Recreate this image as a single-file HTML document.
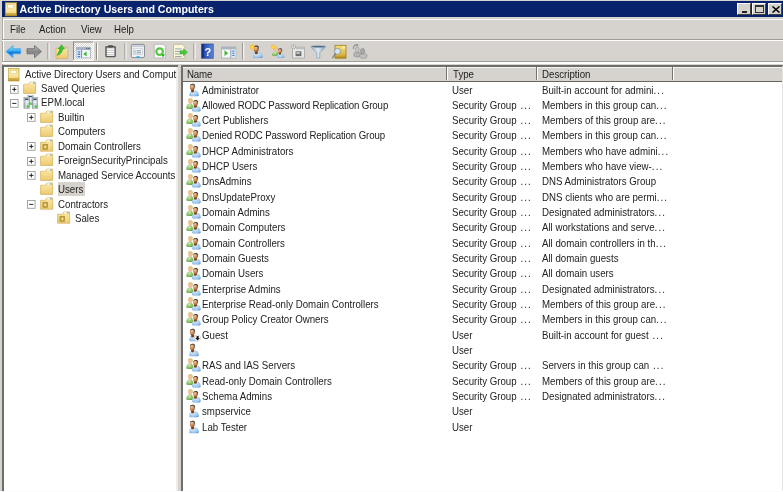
<!DOCTYPE html>
<html><head><meta charset="utf-8">
<style>
*{margin:0;padding:0;box-sizing:border-box}
html,body{width:783px;height:492px;overflow:hidden;background:#d6d3ce}
body{position:relative;will-change:transform;font-family:"Liberation Sans",sans-serif;font-size:9.7px;color:#222}
.a{position:absolute}
.t{position:absolute;white-space:nowrap;line-height:15px;height:15px;font-size:10.2px;transform:scaleX(0.951);transform-origin:0 0}
.ic{position:absolute;overflow:visible}
.exp{position:absolute;width:9px;height:9px;border:1px solid #9a9a9a;background:#fff}
.exp .h{position:absolute;left:1px;top:3px;width:5px;height:1px;background:#333}
.exp .v{position:absolute;left:3px;top:1px;width:1px;height:5px;background:#333}
.sel{position:absolute;background:#d6d3cc}
.sep{position:absolute;top:43px;width:2px;height:16px;border-left:1px solid #8e8b85;border-right:1px solid #fff}
</style></head><body>
<svg width="0" height="0" style="position:absolute">
<defs>
 <linearGradient id="gold" x1="0" y1="0" x2="1" y2="1"><stop offset="0" stop-color="#fff3b0"/><stop offset="0.6" stop-color="#e9cf6c"/><stop offset="1" stop-color="#b08a1e"/></linearGradient>
 <linearGradient id="fold" x1="0" y1="0" x2="0" y2="1"><stop offset="0" stop-color="#fbeaa8"/><stop offset="1" stop-color="#eccb72"/></linearGradient>
 <radialGradient id="face" cx="0.4" cy="0.3" r="0.75"><stop offset="0" stop-color="#f2c9a0"/><stop offset="0.55" stop-color="#c98a55"/><stop offset="1" stop-color="#7a4118"/></radialGradient>
 <radialGradient id="bblue" cx="0.4" cy="0.35" r="0.75"><stop offset="0" stop-color="#d2e8fa"/><stop offset="0.7" stop-color="#9cc6ee"/><stop offset="1" stop-color="#5b93cc"/></radialGradient>
 <radialGradient id="bgreen" cx="0.4" cy="0.35" r="0.75"><stop offset="0" stop-color="#b8e09a"/><stop offset="0.7" stop-color="#7dbb5c"/><stop offset="1" stop-color="#43892c"/></radialGradient>

 <linearGradient id="rootg" x1="0" y1="0" x2="0" y2="1"><stop offset="0" stop-color="#f3de8c"/><stop offset="0.45" stop-color="#f8e9a6"/><stop offset="0.76" stop-color="#f2dc8a"/><stop offset="0.8" stop-color="#d2ae48"/><stop offset="1" stop-color="#c29a30"/></linearGradient>
 <linearGradient id="srv" x1="0" y1="0" x2="1" y2="0"><stop offset="0" stop-color="#9aa5ae"/><stop offset="0.5" stop-color="#e4e9ed"/><stop offset="1" stop-color="#a8b2ba"/></linearGradient>
 <symbol id="u" viewBox="0 0 16 16">
  <path d="M3.2 12.2 C3.2 8.6 5 7.2 7.9 7.2 C11 7.2 12.8 8.6 12.8 12.2 C12.8 13.1 11 13.3 7.9 13.3 C5 13.3 3.2 13.1 3.2 12.2Z" fill="url(#bblue)"/>
  <path d="M5.4 8.2 L6.4 10.6 L7.2 8.2Z" fill="#fff" opacity=".85"/>
  <path d="M5 8.6 C5.5 9.6 7.4 9.8 8 8.6 L7.8 6.6 L5.4 6.6Z" fill="#7a3e12"/>
  <ellipse cx="6.3" cy="4.1" rx="2.3" ry="3.4" fill="url(#face)"/>
  <path d="M3.9 3.2 C3.6 0.2 8.9 -0.3 9.1 2.4 L9.1 5.6 C8.6 4.5 8.5 2.4 7.6 2 C6.5 1.6 4.8 1.9 3.9 3.2Z" fill="#454545"/>
 </symbol>
 <symbol id="g" viewBox="0 0 16 16">
  <path d="M0.2 10 C0.2 7.3 1.8 5.8 3.9 5.8 C6.2 5.8 7.4 7.3 7.4 10 C7.4 10.8 6 11 3.9 11 C1.8 11 0.2 10.8 0.2 10Z" fill="url(#bgreen)"/>
  <path d="M3 6.5 L3.8 8.6 L4.6 6.5Z" fill="#fff" opacity=".8"/>
  <ellipse cx="4.3" cy="3.2" rx="2.1" ry="3" fill="#ebc29c"/>
  <path d="M1.9 2.8 C1.5 -0.6 7.2 -0.8 6.9 2.6 L6.9 5 C6.4 4 6.3 1.8 5.3 1.5 C4.2 1.2 2.8 1.6 1.9 2.8Z" fill="#d9c27a"/>
  <path d="M6 12.4 C6 9 7.6 7.5 10.3 7.5 C13 7.5 14.7 9 14.7 12.4 C14.7 13.4 13 13.6 10.3 13.6 C7.6 13.6 6 13.4 6 12.4Z" fill="url(#bblue)"/>
  <path d="M8.2 8.4 L9.1 10.6 L9.9 8.4Z" fill="#fff" opacity=".85"/>
  <path d="M7.9 8.9 C8.4 9.8 10.3 10 10.8 8.9 L10.6 7.2 L8.2 7.2Z" fill="#7a3e12"/>
  <ellipse cx="9.4" cy="5.3" rx="2.1" ry="3.1" fill="url(#face)"/>
  <path d="M7.2 4.4 C6.9 1.3 12.1 1.1 12.1 3.8 L12 6.6 C11.5 5.6 11.4 3.5 10.6 3.2 C9.6 2.8 8 3.2 7.2 4.4Z" fill="#404040"/>
 </symbol>
 <symbol id="folder" viewBox="0 0 16 16">
  <path d="M0.6 3.3 L5.6 3.3 C6.2 3.3 6.2 1.1 7 1.1 L12.6 1.1 L12.6 12.4 L0.6 12.4Z" fill="url(#fold)" stroke="#d2aa58" stroke-width="0.7"/>
  <path d="M7 1.9 L12 1.9" stroke="#fffbea" stroke-width="1"/>
  <path d="M0.8 3.8 L12.4 3.8" stroke="#f9e7ae" stroke-width="0.5"/>
  <rect x="10" y="1.5" width="1.9" height="1" fill="#4f9be0"/>
  <rect x="11.9" y="3.6" width="0.6" height="8.6" fill="#e2bd68" opacity=".7"/>
 </symbol>
 <symbol id="ou" viewBox="0 0 16 16">
  <path d="M0.6 3.3 L5.6 3.3 C6.2 3.3 6.2 0.9 7 0.9 L12.6 0.9 L12.8 12.2 L0.6 12.2Z" fill="url(#fold)" stroke="#d2aa58" stroke-width="0.7"/>
  <path d="M7 1.7 L12 1.7" stroke="#fffbea" stroke-width="1"/>
  <rect x="10" y="1.3" width="1.9" height="1" fill="#4f9be0"/>
  <rect x="8.8" y="3.6" width="0.6" height="8.4" fill="#f7e6b0" opacity=".8"/>
  <rect x="2.9" y="5.2" width="4.8" height="5.2" fill="#c6a440" stroke="#a0802a" stroke-width="0.5"/>
  <circle cx="5.3" cy="7.8" r="1.1" fill="#f8eeb0"/>
 </symbol>
 <symbol id="root" viewBox="0 0 16 16">
  <rect x="0.2" y="1.6" width="10.8" height="12.4" fill="url(#rootg)" stroke="#b38e2a" stroke-width="0.6"/>
  <rect x="2.4" y="3.4" width="5.8" height="3.3" fill="#fffce8" stroke="#dcc070" stroke-width="0.5"/>
 </symbol>
 <symbol id="domain" viewBox="0 0 16 16">
  <rect x="4.9" y="-0.2" width="5.2" height="10" fill="url(#srv)" stroke="#8a949c" stroke-width="0.5"/>
  <rect x="5.8" y="0.9" width="3.4" height="1.2" rx="0.6" fill="#35505e"/>
  <rect x="0.9" y="2.5" width="5.7" height="11" fill="url(#srv)" stroke="#8a949c" stroke-width="0.5"/>
  <rect x="9.2" y="2.5" width="5.6" height="11" fill="url(#srv)" stroke="#8a949c" stroke-width="0.5"/>
  <rect x="2" y="3.6" width="3.4" height="1.3" rx="0.6" fill="#35505e"/><rect x="10.3" y="3.6" width="3.4" height="1.3" rx="0.6" fill="#35505e"/>
  <rect x="1.6" y="6.5" width="4.3" height="1" fill="#f6f8fa"/><rect x="9.9" y="6.5" width="4.3" height="1" fill="#f6f8fa"/>
  <circle cx="4.8" cy="11.6" r="1.3" fill="#3fd22a"/><circle cx="12.9" cy="11.6" r="1.3" fill="#3fd22a"/><circle cx="7.5" cy="8.6" r="1.2" fill="#3fd22a"/>
 </symbol>
</defs></svg>

<!-- window frame / title -->
<div class="a" style="left:0;top:0;width:783px;height:492px;background:#d6d3ce"></div>
<div class="a" style="left:2px;top:1px;width:781px;height:16px;background:#08236b"></div>
<svg class="ic" style="left:4.8px;top:1px" width="17" height="17" viewBox="0 0 16 16"><use href="#root"/></svg>
<div class="a" style="left:19.5px;top:1px;line-height:16px;font-weight:bold;font-size:10.6px;color:#fff;white-space:nowrap">Active Directory Users and Computers</div>
<!-- caption buttons -->
<div class="a" style="left:737px;top:3px;width:14px;height:12px;background:#d6d3ce;border-top:1px solid #fff;border-left:1px solid #fff;border-right:1px solid #404040;border-bottom:1px solid #404040"><div class="a" style="left:3.5px;top:6.5px;width:5px;height:2px;background:#222"></div></div>
<div class="a" style="left:752px;top:3px;width:14px;height:12px;background:#d6d3ce;border-top:1px solid #fff;border-left:1px solid #fff;border-right:1px solid #404040;border-bottom:1px solid #404040"><div class="a" style="left:1.5px;top:0.7px;width:9px;height:8px;border:1px solid #333;border-top-width:2px"></div></div>
<div class="a" style="left:768px;top:3px;width:14px;height:12px;background:#d6d3ce;border-top:1px solid #fff;border-left:1px solid #fff;border-right:1px solid #404040;border-bottom:1px solid #404040"><svg class="a" style="left:2.5px;top:1.5px" width="8" height="7"><path d="M0.5 0.5 L7.5 6.5 M7.5 0.5 L0.5 6.5" stroke="#000" stroke-width="1.5"/></svg></div>

<!-- menu bar -->
<div class="a" style="left:3px;top:19px;width:780px;height:1px;background:#fff"></div>
<div class="a" style="left:2px;top:17px;width:1px;height:48px;background:#aeaba4"></div><div class="a" style="left:3px;top:19px;width:1px;height:20px;background:#fff"></div>
<div class="a" style="left:2px;top:38.6px;width:781px;height:1px;background:#9f9c95"></div>
<div class="a" style="left:2px;top:39.6px;width:781px;height:1px;background:#fff"></div>
<div class="t" style="left:10px;top:22px">File</div>
<div class="t" style="left:39px;top:22px">Action</div>
<div class="t" style="left:80.5px;top:22px">View</div>
<div class="t" style="left:114px;top:22px">Help</div>

<!-- toolbar -->
<div class="a" style="left:3px;top:40px;width:1px;height:21px;background:#fff"></div>
<div class="a" style="left:2px;top:61px;width:781px;height:1px;background:#9f9c95"></div>
<div class="a" style="left:2px;top:62px;width:781px;height:2px;background:#fff"></div>
<svg class="a" style="left:0;top:40px" width="380" height="22" viewBox="0 40 380 22">
<defs>
 <linearGradient id="bk" x1="0" y1="0" x2="0" y2="1"><stop offset="0" stop-color="#9ee2fd"/><stop offset="0.42" stop-color="#3fb0f2"/><stop offset="0.6" stop-color="#0c72d8"/><stop offset="1" stop-color="#6ccaf8"/></linearGradient>
 <linearGradient id="fw" x1="0" y1="0" x2="0" y2="1"><stop offset="0" stop-color="#c4c4c4"/><stop offset="0.5" stop-color="#858585"/><stop offset="1" stop-color="#a8a8a8"/></linearGradient>
 <linearGradient id="hb" x1="0" y1="0" x2="1" y2="0"><stop offset="0" stop-color="#1d3f9e"/><stop offset="1" stop-color="#5b86db"/></linearGradient>
 <linearGradient id="fun" x1="0" y1="0" x2="1" y2="0"><stop offset="0" stop-color="#9fb9cc"/><stop offset="0.5" stop-color="#dde9f1"/><stop offset="1" stop-color="#7f9db5"/></linearGradient>
 <pattern id="dith" width="2" height="2" patternUnits="userSpaceOnUse"><rect width="2" height="2" fill="#d8d5ce"/><rect width="1" height="1" fill="#fff"/><rect x="1" y="1" width="1" height="1" fill="#fff"/></pattern>
</defs>
<!-- back -->
<path d="M6 51.5 L13 45.5 L13 48.7 L20.7 48.7 L20.7 53.8 L13 53.8 L13 57.8Z" fill="url(#bk)" stroke="#4aa8ec" stroke-width="0.8" stroke-linejoin="round"/>
<!-- forward -->
<path d="M41.4 51.5 L34.5 45.5 L34.5 48.7 L27 48.7 L27 53.8 L34.5 53.8 L34.5 57.8Z" fill="url(#fw)" stroke="#666" stroke-width="0.8" stroke-linejoin="round"/>
<rect x="47.5" y="43" width="1" height="16.5" fill="#8e8b85"/><rect x="48.5" y="43" width="1" height="16.5" fill="#fff"/>
<!-- up folder -->
<path d="M56 48.3 L60 48.3 L61 47.2 L67.8 47.2 L67.8 58.5 L56 58.5Z" fill="url(#fold)" stroke="#d6ae58" stroke-width="0.7"/>
<path d="M57.2 55.5 C58.2 52.5 59.8 50.5 59.8 48.8 L58.2 48.8 L61.6 44.8 L64.4 49 L62.6 49 C62.4 52 60.2 54.5 57.2 55.5Z" fill="#3cc230" stroke="#239a1c" stroke-width="0.5"/>
<circle cx="65.5" cy="48" r="0.8" fill="#7ab6e6"/>
<!-- pressed button -->
<rect x="73" y="41.5" width="20.5" height="19" fill="url(#dith)"/>
<rect x="73" y="41.5" width="20.5" height="1" fill="#8e8b85"/><rect x="73" y="41.5" width="1" height="19" fill="#8e8b85"/>
<rect x="73" y="59.8" width="20.5" height="1" fill="#fff"/><rect x="92.8" y="41.5" width="1" height="19" fill="#fff"/>
<rect x="76.3" y="47.2" width="14.3" height="10.7" fill="#f6f8fa" stroke="#8d9aab" stroke-width="0.6"/>
<rect x="76.3" y="47.2" width="14.3" height="2.8" fill="#a7b3c3"/>
<rect x="86" y="47.8" width="1.4" height="1.5" fill="#5d6b7e"/><rect x="88.2" y="47.8" width="1.4" height="1.5" fill="#5d6b7e"/>
<rect x="76.6" y="50" width="4.8" height="7.6" fill="#e1e7ee"/>
<rect x="81.2" y="50" width="0.9" height="7.6" fill="#6e7d90"/>
<rect x="77.7" y="51.3" width="2.5" height="1.3" rx="0.5" fill="#3b86d6"/><rect x="77.7" y="53.6" width="2.5" height="1.3" rx="0.5" fill="#3b86d6"/><rect x="77.7" y="55.9" width="2.5" height="1.3" rx="0.5" fill="#3b86d6"/>
<path d="M83.2 54 L86.6 51.4 L86.6 56.6Z" fill="#3cba2e"/>
<rect x="96" y="43" width="1" height="16.5" fill="#8e8b85"/><rect x="97" y="43" width="1" height="16.5" fill="#fff"/>
<!-- clipboard -->
<rect x="105.3" y="46" width="10.6" height="11.3" rx="1.3" fill="#5a5a5a"/>
<rect x="106.8" y="47.5" width="7.6" height="8.4" fill="#c9c9c9"/>
<rect x="106.8" y="48.6" width="7.6" height="1.1" fill="#fff"/><rect x="106.8" y="50.8" width="7.6" height="1.1" fill="#fff"/><rect x="106.8" y="53" width="7.6" height="1.1" fill="#fff"/><rect x="106.8" y="55.1" width="7.6" height="0.9" fill="#f2f2f2"/>
<rect x="108.2" y="45.2" width="4.8" height="2.2" rx="0.6" fill="#4a4a4a"/>
<rect x="124.5" y="43" width="1" height="16.5" fill="#8e8b85"/><rect x="125.5" y="43" width="1" height="16.5" fill="#fff"/>
<!-- properties -->
<rect x="131.3" y="44.4" width="13.2" height="13.2" rx="1.5" fill="#eef0f3" stroke="#7d8590" stroke-width="0.9"/>
<rect x="132" y="45.2" width="11.8" height="1.8" fill="#c7ced8"/>
<rect x="133.5" y="48.5" width="9" height="6" fill="#f7f8fa" stroke="#b6bcc6" stroke-width="0.5"/>
<rect x="134.4" y="50.4" width="1.2" height="1.1" fill="#2f8fe0"/><rect x="136.5" y="50.4" width="4.5" height="0.9" fill="#7b8796"/>
<rect x="134.4" y="52.4" width="1.2" height="1.1" fill="#7b8796"/><rect x="136.5" y="52.4" width="4.5" height="0.9" fill="#7b8796"/>
<rect x="136.5" y="56.2" width="3" height="1.6" fill="#2aa7ec"/>
<!-- refresh -->
<path d="M154.2 44.3 L163.3 44.3 L165.6 46.6 L165.6 57.9 L154.2 57.9Z" fill="#fbfbfb" stroke="#a8a8a8" stroke-width="0.7"/>
<circle cx="159.6" cy="51.6" r="3.3" fill="none" stroke="#52c83e" stroke-width="2.2"/>
<path d="M161.5 54.5 L165 54 L163 57.5Z" fill="#2aa520"/>
<!-- export list -->
<path d="M173.5 44.3 L182.5 44.3 L184.8 46.6 L184.8 58.2 L173.5 58.2Z" fill="#fbf6d8" stroke="#b5ae8a" stroke-width="0.7"/>
<rect x="175" y="48.5" width="6.5" height="0.9" fill="#8d9bb0"/><rect x="175" y="51" width="6.5" height="0.9" fill="#8d9bb0"/><rect x="175" y="53.5" width="6.5" height="0.9" fill="#8d9bb0"/><rect x="175" y="56" width="6.5" height="0.9" fill="#8d9bb0"/>
<path d="M180 50.7 L183.5 50.7 L183.5 48.8 L187.5 52.3 L183.5 55.8 L183.5 53.9 L180 53.9Z" fill="#47c93a" stroke="#2c9d22" stroke-width="0.4"/>
<rect x="193.5" y="43" width="1" height="16.5" fill="#8e8b85"/><rect x="194.5" y="43" width="1" height="16.5" fill="#fff"/>
<!-- help -->
<rect x="201.6" y="44" width="11.6" height="14.2" fill="url(#hb)" stroke="#1a3589" stroke-width="0.6"/>
<rect x="202.2" y="44.5" width="1.5" height="13.2" fill="#132b78"/>
<text x="207.8" y="55.6" font-family="Liberation Sans" font-weight="bold" font-size="11" fill="#fff" text-anchor="middle">?</text>
<!-- action pane -->
<rect x="221.3" y="47" width="14.6" height="11" fill="#f4f6f8" stroke="#8d9aab" stroke-width="0.6"/>
<rect x="221.3" y="47" width="14.6" height="2.4" fill="#a9b4c3"/>
<rect x="231" y="49.4" width="4.6" height="8.3" fill="#dfe6ee"/>
<rect x="230.5" y="49.4" width="0.7" height="8.3" fill="#6e7d90"/>
<rect x="232.3" y="50.5" width="2.2" height="1.1" fill="#3b86d6"/><rect x="232.3" y="52.7" width="2.2" height="1.1" fill="#3b86d6"/><rect x="232.3" y="54.9" width="2.2" height="1.1" fill="#3b86d6"/>
<path d="M224.5 50.3 L228.2 53.2 L224.5 56Z" fill="#3cba2e"/>
<rect x="242.2" y="43" width="1" height="16.5" fill="#8e8b85"/><rect x="243.2" y="43" width="1" height="16.5" fill="#fff"/>
<!-- new user -->
<use href="#u" x="249.8" y="44.8" width="16" height="16"/>
<path d="M252.40 43.70 L253.01 45.62 L254.80 44.70 L253.88 46.49 L255.80 47.10 L253.88 47.71 L254.80 49.50 L253.01 48.58 L252.40 50.50 L251.79 48.58 L250.00 49.50 L250.92 47.71 L249.00 47.10 L250.92 46.49 L250.00 44.70 L251.79 45.62Z" fill="#ffb81c"/>
<circle cx="252.4" cy="47.1" r="1.7" fill="#ffd24a"/>
<!-- new group -->
<use href="#g" x="271.9" y="46.5" width="13.6" height="13.6"/>
<path d="M273.40 43.70 L274.01 45.62 L275.80 44.70 L274.88 46.49 L276.80 47.10 L274.88 47.71 L275.80 49.50 L274.01 48.58 L273.40 50.50 L272.79 48.58 L271.00 49.50 L271.92 47.71 L270.00 47.10 L271.92 46.49 L271.00 44.70 L272.79 45.62Z" fill="#ffb81c"/>
<circle cx="273.4" cy="47.1" r="1.7" fill="#ffd24a"/>
<!-- new OU (gray) -->
<rect x="292.5" y="47.2" width="12" height="10.8" fill="#e9e9e9" stroke="#a5a5a5" stroke-width="0.8"/>
<rect x="296" y="47.2" width="8.5" height="2" fill="#bdbdbd"/>
<rect x="295.6" y="51.3" width="5.8" height="4.8" fill="#6f6f6f"/>
<rect x="296.3" y="52.4" width="3.6" height="1.2" fill="#f0f0f0"/>
<circle cx="293.6" cy="46.6" r="2.1" fill="#e6e6e6" stroke="#a0a0a0" stroke-width="1.1" stroke-dasharray="1 0.65"/>
<circle cx="293.6" cy="46.6" r="0.8" fill="#9a9a9a"/>
<!-- filter -->
<path d="M311.3 46 L325.2 46 L325.2 47.5 L319.8 52.5 L319.8 58 L316.7 58 L316.7 52.5 L311.3 47.5Z" fill="url(#fun)" stroke="#7d97ab" stroke-width="0.6"/>
<ellipse cx="318.25" cy="46.7" rx="6.5" ry="0.9" fill="#4f7088"/>
<!-- find -->
<linearGradient id="fndg" x1="0" y1="0" x2="0" y2="1"><stop offset="0" stop-color="#f6de7a"/><stop offset="0.75" stop-color="#dcb53c"/><stop offset="1" stop-color="#a8841c"/></linearGradient>
<rect x="335" y="45.3" width="11" height="12.9" fill="url(#fndg)" stroke="#a4801c" stroke-width="0.8"/>
<rect x="342.5" y="46.3" width="2.6" height="2.4" fill="#fff4c0" opacity=".8"/>
<circle cx="337.5" cy="51.4" r="3" fill="#d6e8ef" stroke="#8c9ba2" stroke-width="0.9"/>
<path d="M335.4 53.7 L332.6 57.6" stroke="#8a8a8a" stroke-width="1.5" stroke-linecap="round"/>
<!-- add to group (gray) -->
<path d="M353.4 49 C353 46 355.2 44.3 357.6 45.1" fill="none" stroke="#8f8f8f" stroke-width="1.1"/>
<path d="M356.6 43.8 L358.6 45.3 L356.8 46.7Z" fill="#8f8f8f"/>
<ellipse cx="357.2" cy="54.6" rx="3.6" ry="2.6" fill="#b3b3b3" stroke="#8a8a8a" stroke-width="0.5"/>
<ellipse cx="357.2" cy="49.6" rx="2" ry="2.6" fill="#c4c4c4" stroke="#8a8a8a" stroke-width="0.5"/>
<ellipse cx="363.3" cy="56" rx="4" ry="2.5" fill="#bdbdbd" stroke="#8a8a8a" stroke-width="0.5"/>
<ellipse cx="362.6" cy="51.2" rx="2.1" ry="2.8" fill="#a9a9a9" stroke="#7d7d7d" stroke-width="0.5"/>
</svg>


<!-- panes -->
<div class="a" style="left:2px;top:65px;width:176px;height:428px;background:#fff;border-top:2px solid #6f6d69;border-left:2px solid #6f6d69"></div>
<div class="a" style="left:176px;top:67px;width:2px;height:427px;background:#eeede9"></div>
<div class="a" style="left:181px;top:65px;width:602px;height:428px;background:#fff;border-top:2px solid #6f6d69;border-left:2px solid #6f6d69;border-right:1px solid #e6e4df"></div>

<!-- header -->
<div class="a" style="left:183px;top:67px;width:599px;height:15px;background:#d6d3ce;border-top:1px solid #f4f3f0;border-bottom:1px solid #68665f"></div>
<div class="a" style="left:446px;top:67px;width:2px;height:13px;border-left:1px solid #77746e;border-right:1px solid #fff"></div>
<div class="a" style="left:536px;top:67px;width:2px;height:13px;border-left:1px solid #77746e;border-right:1px solid #fff"></div>
<div class="a" style="left:671.5px;top:67px;width:2px;height:13px;border-left:1px solid #77746e;border-right:1px solid #fff"></div>
<div class="t" style="left:187px;top:67.2px;letter-spacing:-0.2px">Name</div>
<div class="t" style="left:452.6px;top:67.2px">Type</div>
<div class="t" style="left:542.2px;top:67.2px">Description</div>

<svg class="ic" style="left:8px;top:66.50px" width="16" height="16"><use href="#root"/></svg>
<div class="t" style="left:25px;top:66.50px">Active Directory Users and Comput</div>
<svg class="ic" style="left:10.0px;top:84.5px" width="9" height="9"><rect x="0.5" y="0.5" width="7.6" height="7.8" fill="#fff" stroke="#9c9c9c" stroke-width="0.9"/><path d="M2.2 4.4 H6.4 M4.3 2.3 V6.5" stroke="#111" stroke-width="0.9"/></svg>
<svg class="ic" style="left:23px;top:80.95px" width="16" height="16"><use href="#folder"/></svg>
<div class="t" style="left:41.3px;top:80.95px">Saved Queries</div>
<svg class="ic" style="left:10.0px;top:99.0px" width="9" height="9"><rect x="0.5" y="0.5" width="7.6" height="7.8" fill="#fff" stroke="#9c9c9c" stroke-width="0.9"/><path d="M2.2 4.4 H6.4" stroke="#111" stroke-width="0.9"/></svg>
<svg class="ic" style="left:23px;top:95.40px" width="16" height="16"><use href="#domain"/></svg>
<div class="t" style="left:41.3px;top:95.40px">EPM.local</div>
<svg class="ic" style="left:27.0px;top:113.4px" width="9" height="9"><rect x="0.5" y="0.5" width="7.6" height="7.8" fill="#fff" stroke="#9c9c9c" stroke-width="0.9"/><path d="M2.2 4.4 H6.4 M4.3 2.3 V6.5" stroke="#111" stroke-width="0.9"/></svg>
<svg class="ic" style="left:40px;top:109.85px" width="16" height="16"><use href="#folder"/></svg>
<div class="t" style="left:58.3px;top:109.85px">Builtin</div>
<svg class="ic" style="left:40px;top:124.30px" width="16" height="16"><use href="#folder"/></svg>
<div class="t" style="left:58.3px;top:124.30px">Computers</div>
<svg class="ic" style="left:27.0px;top:142.3px" width="9" height="9"><rect x="0.5" y="0.5" width="7.6" height="7.8" fill="#fff" stroke="#9c9c9c" stroke-width="0.9"/><path d="M2.2 4.4 H6.4 M4.3 2.3 V6.5" stroke="#111" stroke-width="0.9"/></svg>
<svg class="ic" style="left:40px;top:138.75px" width="16" height="16"><use href="#ou"/></svg>
<div class="t" style="left:58.3px;top:138.75px">Domain Controllers</div>
<svg class="ic" style="left:27.0px;top:156.8px" width="9" height="9"><rect x="0.5" y="0.5" width="7.6" height="7.8" fill="#fff" stroke="#9c9c9c" stroke-width="0.9"/><path d="M2.2 4.4 H6.4 M4.3 2.3 V6.5" stroke="#111" stroke-width="0.9"/></svg>
<svg class="ic" style="left:40px;top:153.20px" width="16" height="16"><use href="#folder"/></svg>
<div class="t" style="left:58.3px;top:153.20px">ForeignSecurityPrincipals</div>
<svg class="ic" style="left:27.0px;top:171.2px" width="9" height="9"><rect x="0.5" y="0.5" width="7.6" height="7.8" fill="#fff" stroke="#9c9c9c" stroke-width="0.9"/><path d="M2.2 4.4 H6.4 M4.3 2.3 V6.5" stroke="#111" stroke-width="0.9"/></svg>
<svg class="ic" style="left:40px;top:167.65px" width="16" height="16"><use href="#folder"/></svg>
<div class="t" style="left:58.3px;top:167.65px">Managed Service Accounts</div>
<svg class="ic" style="left:40px;top:182.10px" width="16" height="16"><use href="#folder"/></svg>
<div class="sel" style="left:57.5px;top:182.00px;width:27.6px;height:13.6px"></div>
<div class="t" style="left:58.3px;top:182.10px">Users</div>
<svg class="ic" style="left:27.0px;top:200.1px" width="9" height="9"><rect x="0.5" y="0.5" width="7.6" height="7.8" fill="#fff" stroke="#9c9c9c" stroke-width="0.9"/><path d="M2.2 4.4 H6.4" stroke="#111" stroke-width="0.9"/></svg>
<svg class="ic" style="left:40px;top:196.55px" width="16" height="16"><use href="#ou"/></svg>
<div class="t" style="left:58.3px;top:196.55px">Contractors</div>
<svg class="ic" style="left:57.1px;top:211.00px" width="16" height="16"><use href="#ou"/></svg>
<div class="t" style="left:75.3px;top:211.00px">Sales</div>
<div class="a" style="left:0;top:491px;width:783px;height:1px;background:#fcfcfc"></div>
<svg class="ic" style="left:186px;top:82.50px" width="16" height="16"><use href="#u"/></svg>
<div class="t" style="left:202px;top:82.50px">Administrator</div>
<div class="t" style="left:452.2px;top:82.50px">User</div>
<div class="t" style="left:542.2px;top:82.50px">Built-in account for admini<span style="letter-spacing:1.2px">..</span>.</div>
<svg class="ic" style="left:186px;top:97.83px" width="16" height="16"><use href="#g"/></svg>
<div class="t" style="left:202px;top:97.83px;letter-spacing:-0.12px">Allowed RODC Password Replication Group</div>
<div class="t" style="left:452.2px;top:97.83px">Security Group<span style="letter-spacing:1.2px"> ..</span>.</div>
<div class="t" style="left:542.2px;top:97.83px">Members in this group can<span style="letter-spacing:1.2px">..</span>.</div>
<svg class="ic" style="left:186px;top:113.16px" width="16" height="16"><use href="#g"/></svg>
<div class="t" style="left:202px;top:113.16px">Cert Publishers</div>
<div class="t" style="left:452.2px;top:113.16px">Security Group<span style="letter-spacing:1.2px"> ..</span>.</div>
<div class="t" style="left:542.2px;top:113.16px">Members of this group are<span style="letter-spacing:1.2px">..</span>.</div>
<svg class="ic" style="left:186px;top:128.49px" width="16" height="16"><use href="#g"/></svg>
<div class="t" style="left:202px;top:128.49px;letter-spacing:-0.12px">Denied RODC Password Replication Group</div>
<div class="t" style="left:452.2px;top:128.49px">Security Group<span style="letter-spacing:1.2px"> ..</span>.</div>
<div class="t" style="left:542.2px;top:128.49px">Members in this group can<span style="letter-spacing:1.2px">..</span>.</div>
<svg class="ic" style="left:186px;top:143.82px" width="16" height="16"><use href="#g"/></svg>
<div class="t" style="left:202px;top:143.82px">DHCP Administrators</div>
<div class="t" style="left:452.2px;top:143.82px">Security Group<span style="letter-spacing:1.2px"> ..</span>.</div>
<div class="t" style="left:542.2px;top:143.82px">Members who have admini<span style="letter-spacing:1.2px">..</span>.</div>
<svg class="ic" style="left:186px;top:159.15px" width="16" height="16"><use href="#g"/></svg>
<div class="t" style="left:202px;top:159.15px">DHCP Users</div>
<div class="t" style="left:452.2px;top:159.15px">Security Group<span style="letter-spacing:1.2px"> ..</span>.</div>
<div class="t" style="left:542.2px;top:159.15px">Members who have view-<span style="letter-spacing:1.2px">..</span>.</div>
<svg class="ic" style="left:186px;top:174.48px" width="16" height="16"><use href="#g"/></svg>
<div class="t" style="left:202px;top:174.48px">DnsAdmins</div>
<div class="t" style="left:452.2px;top:174.48px">Security Group<span style="letter-spacing:1.2px"> ..</span>.</div>
<div class="t" style="left:542.2px;top:174.48px">DNS Administrators Group</div>
<svg class="ic" style="left:186px;top:189.81px" width="16" height="16"><use href="#g"/></svg>
<div class="t" style="left:202px;top:189.81px">DnsUpdateProxy</div>
<div class="t" style="left:452.2px;top:189.81px">Security Group<span style="letter-spacing:1.2px"> ..</span>.</div>
<div class="t" style="left:542.2px;top:189.81px">DNS clients who are permi<span style="letter-spacing:1.2px">..</span>.</div>
<svg class="ic" style="left:186px;top:205.14px" width="16" height="16"><use href="#g"/></svg>
<div class="t" style="left:202px;top:205.14px">Domain Admins</div>
<div class="t" style="left:452.2px;top:205.14px">Security Group<span style="letter-spacing:1.2px"> ..</span>.</div>
<div class="t" style="left:542.2px;top:205.14px">Designated administrators<span style="letter-spacing:1.2px">..</span>.</div>
<svg class="ic" style="left:186px;top:220.47px" width="16" height="16"><use href="#g"/></svg>
<div class="t" style="left:202px;top:220.47px">Domain Computers</div>
<div class="t" style="left:452.2px;top:220.47px">Security Group<span style="letter-spacing:1.2px"> ..</span>.</div>
<div class="t" style="left:542.2px;top:220.47px">All workstations and serve<span style="letter-spacing:1.2px">..</span>.</div>
<svg class="ic" style="left:186px;top:235.80px" width="16" height="16"><use href="#g"/></svg>
<div class="t" style="left:202px;top:235.80px">Domain Controllers</div>
<div class="t" style="left:452.2px;top:235.80px">Security Group<span style="letter-spacing:1.2px"> ..</span>.</div>
<div class="t" style="left:542.2px;top:235.80px">All domain controllers in th<span style="letter-spacing:1.2px">..</span>.</div>
<svg class="ic" style="left:186px;top:251.13px" width="16" height="16"><use href="#g"/></svg>
<div class="t" style="left:202px;top:251.13px">Domain Guests</div>
<div class="t" style="left:452.2px;top:251.13px">Security Group<span style="letter-spacing:1.2px"> ..</span>.</div>
<div class="t" style="left:542.2px;top:251.13px">All domain guests</div>
<svg class="ic" style="left:186px;top:266.46px" width="16" height="16"><use href="#g"/></svg>
<div class="t" style="left:202px;top:266.46px">Domain Users</div>
<div class="t" style="left:452.2px;top:266.46px">Security Group<span style="letter-spacing:1.2px"> ..</span>.</div>
<div class="t" style="left:542.2px;top:266.46px">All domain users</div>
<svg class="ic" style="left:186px;top:281.79px" width="16" height="16"><use href="#g"/></svg>
<div class="t" style="left:202px;top:281.79px">Enterprise Admins</div>
<div class="t" style="left:452.2px;top:281.79px">Security Group<span style="letter-spacing:1.2px"> ..</span>.</div>
<div class="t" style="left:542.2px;top:281.79px">Designated administrators<span style="letter-spacing:1.2px">..</span>.</div>
<svg class="ic" style="left:186px;top:297.12px" width="16" height="16"><use href="#g"/></svg>
<div class="t" style="left:202px;top:297.12px">Enterprise Read-only Domain Controllers</div>
<div class="t" style="left:452.2px;top:297.12px">Security Group<span style="letter-spacing:1.2px"> ..</span>.</div>
<div class="t" style="left:542.2px;top:297.12px">Members of this group are<span style="letter-spacing:1.2px">..</span>.</div>
<svg class="ic" style="left:186px;top:312.45px" width="16" height="16"><use href="#g"/></svg>
<div class="t" style="left:202px;top:312.45px">Group Policy Creator Owners</div>
<div class="t" style="left:452.2px;top:312.45px">Security Group<span style="letter-spacing:1.2px"> ..</span>.</div>
<div class="t" style="left:542.2px;top:312.45px">Members in this group can<span style="letter-spacing:1.2px">..</span>.</div>
<svg class="ic" style="left:186px;top:327.78px" width="16" height="16"><use href="#u"/><circle cx="11.6" cy="10.2" r="3.1" fill="#fff" stroke="#c8c8c8" stroke-width="0.6"/><path d="M10.6 7.9 L12.6 7.9 L12.6 9.9 L13.9 9.9 L11.6 12.5 L9.3 9.9 L10.6 9.9Z" fill="#111"/></svg>
<div class="t" style="left:202px;top:327.78px">Guest</div>
<div class="t" style="left:452.2px;top:327.78px">User</div>
<div class="t" style="left:542.2px;top:327.78px">Built-in account for guest<span style="letter-spacing:1.2px"> ..</span>.</div>
<svg class="ic" style="left:186px;top:343.11px" width="16" height="16"><use href="#u"/></svg>
<div class="t" style="left:452.2px;top:343.11px">User</div>
<svg class="ic" style="left:186px;top:358.44px" width="16" height="16"><use href="#g"/></svg>
<div class="t" style="left:202px;top:358.44px">RAS and IAS Servers</div>
<div class="t" style="left:452.2px;top:358.44px">Security Group<span style="letter-spacing:1.2px"> ..</span>.</div>
<div class="t" style="left:542.2px;top:358.44px">Servers in this group can<span style="letter-spacing:1.2px"> ..</span>.</div>
<svg class="ic" style="left:186px;top:373.77px" width="16" height="16"><use href="#g"/></svg>
<div class="t" style="left:202px;top:373.77px">Read-only Domain Controllers</div>
<div class="t" style="left:452.2px;top:373.77px">Security Group<span style="letter-spacing:1.2px"> ..</span>.</div>
<div class="t" style="left:542.2px;top:373.77px">Members of this group are<span style="letter-spacing:1.2px">..</span>.</div>
<svg class="ic" style="left:186px;top:389.10px" width="16" height="16"><use href="#g"/></svg>
<div class="t" style="left:202px;top:389.10px">Schema Admins</div>
<div class="t" style="left:452.2px;top:389.10px">Security Group<span style="letter-spacing:1.2px"> ..</span>.</div>
<div class="t" style="left:542.2px;top:389.10px">Designated administrators<span style="letter-spacing:1.2px">..</span>.</div>
<svg class="ic" style="left:186px;top:404.43px" width="16" height="16"><use href="#u"/></svg>
<div class="t" style="left:202px;top:404.43px">smpservice</div>
<div class="t" style="left:452.2px;top:404.43px">User</div>
<svg class="ic" style="left:186px;top:419.76px" width="16" height="16"><use href="#u"/></svg>
<div class="t" style="left:202px;top:419.76px">Lab Tester</div>
<div class="t" style="left:452.2px;top:419.76px">User</div>
</body></html>
